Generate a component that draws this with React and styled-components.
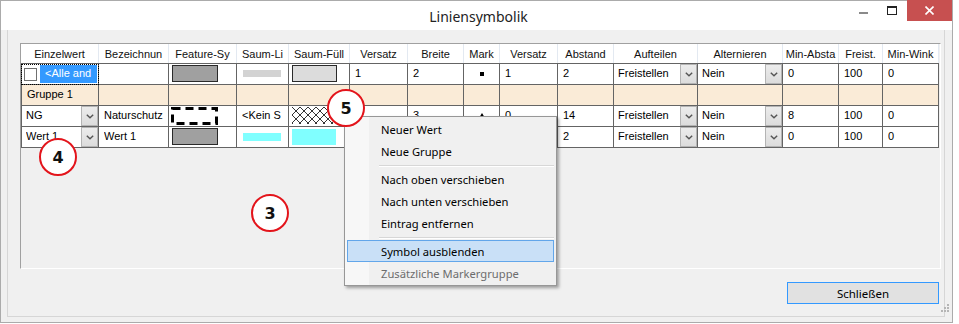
import React from 'react';
import styled, { createGlobalStyle } from 'styled-components';

const GlobalStyle = createGlobalStyle`
  body {
    margin: 0;
    background: #ffffff;
    font-family: "Noto Sans", sans-serif;
  }
`;

const UI_FONT = '"Segoe UI", "Noto Sans", sans-serif';
const GRID_FONT = '"Liberation Sans", Arial, sans-serif';
const LINE = '#646464';

const Window = styled.div`
  position: relative;
  width: 953px;
  height: 323px;
  box-sizing: border-box;
  border: 1px solid #ababab;
  background: #f0f0f0;
  display: flex;
  flex-direction: column;
`;

const TitleBar = styled.div`
  position: relative;
  height: 29px;
  background: #ffffff;
  display: flex;
  align-items: center;
  justify-content: center;
`;

const Title = styled.div`
  font-family: ${UI_FONT};
  font-size: 14px;
  color: #222;
  padding-top: 2px;
  padding-left: 4px;
`;

const Controls = styled.div`
  position: absolute;
  right: 0;
  top: -1px;
  display: flex;
  align-items: flex-start;
`;

const CtrlButton = styled.div`
  width: ${p => p.$w || 28}px;
  height: 21px;
  display: flex;
  align-items: center;
  justify-content: center;
  background: ${p => p.$close ? '#c75050' : 'transparent'};
`;

const Frame = styled.div`
  flex: 1;
  margin: 0 7px 5px 6px;
  border: 1px solid #d6d6d6;
  border-top: none;
  padding: 13px 3px 0 12px;
  display: flex;
  flex-direction: column;
`;

const GridPanel = styled.div`
  height: 226px;
  box-sizing: border-box;
  border-top: 1px solid #a0a0a0;
  border-left: 1px solid #a0a0a0;
  border-right: 1px solid #ffffff;
  border-bottom: 1px solid #ffffff;
  background: #f0f0f0;
  overflow: hidden;
`;

const HeaderRow = styled.div`
  display: flex;
  height: 20px;
  box-sizing: border-box;
  border-bottom: 1px solid ${LINE};
  width: 918px;
`;

const HeadCell = styled.div`
  width: ${p => p.$w}px;
  flex: none;
  box-sizing: border-box;
  border-right: 1px solid #e3e9f1;
  background: #ffffff;
  font-family: ${GRID_FONT};
  font-size: 11px;
  color: #111;
  display: flex;
  align-items: center;
  justify-content: center;
  white-space: nowrap;
  overflow: hidden;
`;

const Row = styled.div`
  display: flex;
  height: 21px;
  width: 918px;
  background: ${p => p.$group ? '#faebd7' : '#ffffff'};
`;

const Cell = styled.div`
  position: relative;
  width: ${p => p.$w}px;
  flex: none;
  box-sizing: border-box;
  border-right: 1px solid ${LINE};
  border-bottom: 1px solid ${LINE};
  border-left: ${p => p.$first ? `1px solid ${LINE}` : 'none'};
  outline: ${p => p.$focus ? '1px dotted #000' : 'none'};
  outline-offset: -1px;
  font-family: ${GRID_FONT};
  font-size: 11px;
  color: #000;
  display: flex;
  align-items: center;
  justify-content: ${p => p.$center ? 'center' : 'flex-start'};
  padding-left: ${p => p.$pad ?? 4}px;
  white-space: nowrap;
  overflow: hidden;
`;

const CellText = styled.span`
  flex: 1;
  padding-bottom: 2px;
  overflow: hidden;
`;

const DropBtn = styled.div`
  width: 17px;
  height: 20px;
  flex: none;
  box-sizing: border-box;
  border: 1px solid #b4b4b4;
  background: linear-gradient(#ececec, #dcdcdc);
  display: flex;
  align-items: center;
  justify-content: center;
  align-self: flex-start;
`;

const Check = styled.div`
  width: 13px;
  height: 13px;
  flex: none;
  box-sizing: border-box;
  border: 1px solid #707070;
  background: #fff;
  margin-left: -2px;
`;

const Selected = styled.div`
  flex: 1;
  height: 18px;
  margin-left: 3px;
  margin-right: 1px;
  background: #3399ff;
  color: #fff;
  padding-left: 5px;
  display: flex;
  align-items: center;
  padding-bottom: 2px;
  box-sizing: border-box;
`;

const Swatch = styled.div`
  width: ${p => p.$w}px;
  height: ${p => p.$h}px;
  box-sizing: border-box;
  background: ${p => p.$bg};
  border: ${p => p.$border ? '1px solid #2a2a2a' : 'none'};
  margin-bottom: ${p => p.$mb || 0}px;
`;

const MarkSquare = styled.div`
  width: 4px;
  height: 4px;
  background: #000;
  margin-bottom: 1px;
`;

const ButtonRow = styled.div`
  display: flex;
  justify-content: flex-end;
  padding: 13px 2px 0 0;
`;

const Button = styled.div`
  width: 152px;
  height: 22px;
  box-sizing: border-box;
  border: 1px solid #3399ff;
  background: #e1e1e1;
  font-family: ${UI_FONT};
  font-size: 11.5px;
  color: #000;
  display: flex;
  align-items: center;
  justify-content: center;
`;

const Grip = styled.svg`
  position: absolute;
  right: 3px;
  bottom: 8px;
`;

const Menu = styled.div`
  position: absolute;
  left: 343px;
  top: 115px;
  width: 213px;
  box-sizing: border-box;
  border: 1px solid #979797;
  background: linear-gradient(to right, #f7f7f7 0, #f7f7f7 24px, #f0f0f0 24px);
  box-shadow: 2px 2px 3px rgba(0, 0, 0, 0.35);
  padding: 1px 2px 1px 1px;
  font-family: ${UI_FONT};
  font-size: 11.2px;
`;

const MenuItem = styled.div`
  height: 22px;
  box-sizing: border-box;
  margin-left: 1px;
  padding-left: 33px;
  display: flex;
  align-items: center;
  color: ${p => p.$disabled ? '#6d6d6d' : '#000'};
  background: ${p => p.$active ? '#c9e0f7' : 'transparent'};
  border: 1px solid ${p => p.$active ? '#62a6ea' : 'transparent'};
`;

const Separator = styled.div`
  height: 6px;
  display: flex;
  align-items: center;
  padding-left: 33px;
  &::after {
    content: '';
    flex: 1;
    height: 1px;
    background: #d7d7d7;
    box-shadow: 0 1px 0 #fff;
  }
`;

const Badge = styled.div`
  position: absolute;
  left: ${p => p.$x}px;
  top: ${p => p.$y}px;
  width: 38px;
  height: 38px;
  box-sizing: border-box;
  border-radius: 50%;
  border: 2px solid #e3141b;
  background: #fff;
  font-family: "DejaVu Sans", sans-serif;
  font-weight: bold;
  font-size: 16px;
  color: #111;
  display: flex;
  align-items: center;
  justify-content: center;
`;

const cols = [
  { w: 78, h: 'Einzelwert' },
  { w: 70, h: 'Bezeichnun' },
  { w: 68, h: 'Feature-Sy' },
  { w: 52, h: 'Saum-Li' },
  { w: 61, h: 'Saum-Füll' },
  { w: 58, h: 'Versatz' },
  { w: 56, h: 'Breite' },
  { w: 36, h: 'Mark' },
  { w: 58, h: 'Versatz' },
  { w: 56, h: 'Abstand' },
  { w: 84, h: 'Aufteilen' },
  { w: 85, h: 'Alternieren' },
  { w: 56, h: 'Min-Absta' },
  { w: 44, h: 'Freist.' },
  { w: 56, h: 'Min-Wink' },
];

const W = cols.map(c => c.w);

const Chevron = () => (
  <svg width="8" height="5" viewBox="0 0 8 5">
    <polyline points="0.8,0.8 4,3.8 7.2,0.8" fill="none" stroke="#555" strokeWidth="1.4" />
  </svg>
);

const Combo = ({ w, first, children }) => (
  <Cell $w={w} $first={first}>
    <CellText>{children}</CellText>
    <DropBtn><Chevron /></DropBtn>
  </Cell>
);

const T = ({ i, children }) => (
  <Cell $w={W[i]} $pad={5}><CellText>{children}</CellText></Cell>
);

const Dashed = () => (
  <svg width="47" height="18" style={{ marginBottom: 1 }}>
    <rect x="1.5" y="1.5" width="44" height="15" fill="none" stroke="#000" strokeWidth="3" strokeDasharray="8 5" />
  </svg>
);

const Hatch = () => (
  <svg width="44" height="17" style={{ marginBottom: 1 }}>
    <defs>
      <pattern id="xh" width="8" height="8" patternUnits="userSpaceOnUse">
        <path d="M0 0 L8 8 M8 0 L0 8" stroke="#000" strokeWidth="0.8" />
      </pattern>
    </defs>
    <rect x="0" y="0" width="44" height="17" fill="#fff" />
    <rect x="0" y="0" width="44" height="17" fill="url(#xh)" />
  </svg>
);

const Triangle = () => (
  <svg width="6" height="5" style={{ marginBottom: 2 }}>
    <polygon points="3,0 6,5 0,5" fill="#000" />
  </svg>
);

const EmptyRow = ({ group, label }) => (
  <Row $group={group}>
    {W.map((w, i) => (
      <Cell key={i} $w={w} $first={i === 0} $pad={i === 0 ? 5 : 4}>
        {i === 0 && <CellText>{label}</CellText>}
      </Cell>
    ))}
  </Row>
);

export default function App() {
  return (
    <>
      <GlobalStyle />
      <Window>
        <TitleBar>
          <Title>Liniensymbolik</Title>
          <Controls>
            <CtrlButton $w={28}>
              <svg width="9" height="9"><rect x="0" y="6" width="9" height="2" fill="#8a8a8a" /></svg>
            </CtrlButton>
            <CtrlButton $w={30}>
              <svg width="10" height="9"><rect x="0.5" y="0.5" width="9" height="8" fill="none" stroke="#222" /><rect x="0" y="0" width="10" height="2" fill="#222" /></svg>
            </CtrlButton>
            <CtrlButton $w={45} $close>
              <svg width="9" height="9"><path d="M0.5 0.5 L8.5 8.5 M8.5 0.5 L0.5 8.5" stroke="#fff" strokeWidth="1.6" /></svg>
            </CtrlButton>
          </Controls>
        </TitleBar>

        <Frame>
          <GridPanel>
            <HeaderRow>
              {cols.map((c, i) => (
                <HeadCell key={i} $w={c.w}>{c.h}</HeadCell>
              ))}
            </HeaderRow>

            <Row>
              <Cell $w={W[0]} $first $focus $pad={4}>
                <Check />
                <Selected>&lt;Alle and</Selected>
              </Cell>
              <Cell $w={W[1]} />
              <Cell $w={W[2]} $pad={3}><Swatch $w={46} $h={17} $bg="#a0a0a0" $border $mb={1} /></Cell>
              <Cell $w={W[3]} $pad={6}><Swatch $w={38} $h={7} $bg="#d3d3d3" $mb={1} /></Cell>
              <Cell $w={W[4]} $pad={3}><Swatch $w={45} $h={17} $bg="#dcdcdc" $border $mb={1} /></Cell>
              <T i={5}>1</T>
              <T i={6}>2</T>
              <Cell $w={W[7]} $center $pad={0}><MarkSquare /></Cell>
              <T i={8}>1</T>
              <T i={9}>2</T>
              <Combo w={W[10]}>Freistellen</Combo>
              <Combo w={W[11]}>Nein</Combo>
              <T i={12}>0</T>
              <T i={13}>100</T>
              <T i={14}>0</T>
            </Row>

            <EmptyRow group label="Gruppe 1" />

            <Row>
              <Combo w={W[0]} first>NG</Combo>
              <T i={1}>Naturschutz</T>
              <Cell $w={W[2]} $pad={2}><Dashed /></Cell>
              <T i={3}>&lt;Kein S</T>
              <Cell $w={W[4]} $pad={3}><Hatch /></Cell>
              <T i={5}>6</T>
              <T i={6}>3</T>
              <Cell $w={W[7]} $center $pad={0}><Triangle /></Cell>
              <T i={8}>0</T>
              <T i={9}>14</T>
              <Combo w={W[10]}>Freistellen</Combo>
              <Combo w={W[11]}>Nein</Combo>
              <T i={12}>8</T>
              <T i={13}>100</T>
              <T i={14}>0</T>
            </Row>

            <Row>
              <Combo w={W[0]} first>Wert 1</Combo>
              <T i={1}>Wert 1</T>
              <Cell $w={W[2]} $pad={3}><Swatch $w={46} $h={17} $bg="#a0a0a0" $border $mb={1} /></Cell>
              <Cell $w={W[3]} $pad={6}><Swatch $w={38} $h={8} $bg="#80ffff" $mb={1} /></Cell>
              <Cell $w={W[4]} $pad={3}><Swatch $w={44} $h={16} $bg="#80ffff" $mb={1} /></Cell>
              <Cell $w={W[5]} />
              <Cell $w={W[6]} />
              <Cell $w={W[7]} />
              <Cell $w={W[8]} />
              <T i={9}>2</T>
              <Combo w={W[10]}>Freistellen</Combo>
              <Combo w={W[11]}>Nein</Combo>
              <T i={12}>0</T>
              <T i={13}>100</T>
              <T i={14}>0</T>
            </Row>
          </GridPanel>

          <ButtonRow>
            <Button>Schließen</Button>
          </ButtonRow>
        </Frame>

        <Grip width="10" height="10">
          {[[8, 0], [5, 3], [8, 3], [2, 6], [5, 6], [8, 6]].map(([x, y], i) => (
            <rect key={i} x={x} y={y} width="2" height="2" fill="#b5b5b5" />
          ))}
        </Grip>

        <Menu>
          <MenuItem>Neuer Wert</MenuItem>
          <MenuItem>Neue Gruppe</MenuItem>
          <Separator />
          <MenuItem>Nach oben verschieben</MenuItem>
          <MenuItem>Nach unten verschieben</MenuItem>
          <MenuItem>Eintrag entfernen</MenuItem>
          <Separator />
          <MenuItem $active>Symbol ausblenden</MenuItem>
          <MenuItem $disabled>Zusätzliche Markergruppe</MenuItem>
        </Menu>

        <Badge $x={250} $y={193}>3</Badge>
        <Badge $x={38} $y={137}>4</Badge>
        <Badge $x={326} $y={88}>5</Badge>
      </Window>
    </>
  );
}
